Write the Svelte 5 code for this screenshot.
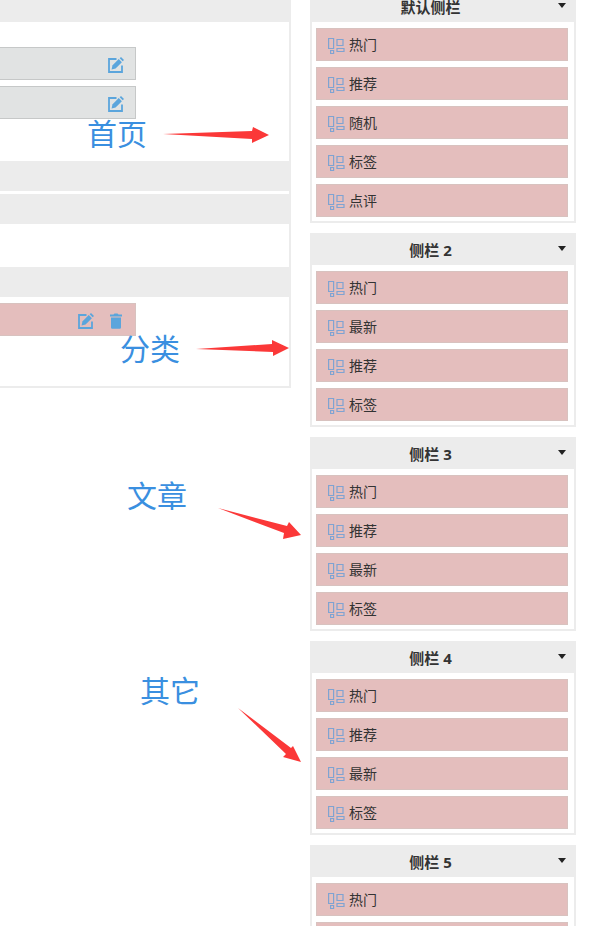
<script lang="ts">
  const sidebars = [
    { name: "默认侧栏", modules: ["热门", "推荐", "随机", "标签", "点评"] },
    { name: "侧栏 2", modules: ["热门", "最新", "推荐", "标签"] },
    { name: "侧栏 3", modules: ["热门", "推荐", "最新", "标签"] },
    { name: "侧栏 4", modules: ["热门", "推荐", "最新", "标签"] },
    { name: "侧栏 5", modules: ["热门", "推荐"] },
  ];

  const notes = [
    { text: "首页", x: 87, y: 145, arrow: "163,134 252,131 253,127 269,135 252,143 252,139" },
    { text: "分类", x: 120, y: 360, arrow: "196,349 272,344 272,340 289,348 273,356 273,352" },
    { text: "文章", x: 127, y: 507, arrow: "218,508 287,526 289,522 301,535 283,539 284,533" },
    { text: "其它", x: 140, y: 702, arrow: "238,708 291,748 293,746 301,762 283,757 286,754" },
  ];
</script>

{#snippet editButton()}
  <button class="tool" aria-label="编辑">
    <svg viewBox="0 0 16 16" width="16" height="16">
      <path d="M8.5 2H1v13h13V8.5" fill="none" stroke="currentColor" stroke-width="1.8" />
      <path d="M3.6 12.4l.8-4 6.3-6.3 3.2 3.2-6.3 6.3z" fill="currentColor" />
      <path d="M11.7 1.3L13 0l3 3-1.3 1.3z" fill="currentColor" />
    </svg>
  </button>
{/snippet}

<main class="page">
  <section class="layout">
    <div class="bar"></div>
    <div class="slots home">
      <div class="slot">{@render editButton()}</div>
      <div class="slot">{@render editButton()}</div>
    </div>
    <div class="bar"></div>
    <div class="bar spaced"></div>
    <div class="empty"></div>
    <div class="bar"></div>
    <div class="slots category">
      <div class="slot active">
        {@render editButton()}
        <button class="tool" aria-label="删除">
          <svg viewBox="0 0 16 16" width="16" height="16">
            <path
              d="M2 1.5h3.5L6.5.4h3l1 1.1H14v2H2zM3 4.5h10v9.7c0 .9-.7 1.6-1.6 1.6H4.6c-.9 0-1.6-.7-1.6-1.6z"
              fill="currentColor"
            />
          </svg>
        </button>
      </div>
    </div>
  </section>

  <aside class="sidebars">
    {#each sidebars as sidebar}
      <section class="sidebar">
        <header>
          <h3>{sidebar.name}</h3>
          <button class="toggle" aria-label="展开"></button>
        </header>
        <ul>
          {#each sidebar.modules as name}
            <li>
              <svg class="icon" viewBox="0 0 18 18" width="18" height="18">
                <path d="M.6 1.5h5v10h-5zM9 2.5h6v6H9zM9 11.5h7v3H9zM2.6 13.5h3v3h-3z" />
              </svg>
              <span>{name}</span>
            </li>
          {/each}
        </ul>
      </section>
    {/each}
  </aside>

  <svg class="notes" width="310" height="780">
    {#each notes as note}
      <text x={note.x} y={note.y}>{note.text}</text>
      <polygon points={note.arrow} />
    {/each}
  </svg>
</main>

<style>
  :global(body) {
    margin: 0;
    background: #fff;
    font-family: "Open Sans", "Noto Sans CJK SC", sans-serif;
    color: #333;
  }

  .page {
    position: relative;
    display: grid;
    grid-template-columns: 1fr 266px;
    column-gap: 19px;
    align-items: start;
    height: 100vh;
    padding-right: 15px;
    box-sizing: border-box;
    overflow: hidden;
  }

  .layout {
    border: 2px solid #ececec;
    border-width: 0 2px 2px 0;
    margin-top: -8px;
  }

  .bar {
    height: 30px;
    background: #ececec;
  }

  .bar.spaced {
    margin-top: 3px;
  }

  .empty {
    height: 43px;
  }

  .slots {
    display: grid;
    grid-template-columns: 8fr 9fr;
    row-gap: 6px;
  }

  .slots.home {
    padding: 25px 0 42px;
  }

  .slots.category {
    padding: 6px 0 50px;
  }

  .slot {
    grid-column: 1;
    display: flex;
    justify-content: flex-end;
    align-items: center;
    gap: 14px;
    height: 33px;
    padding: 2px 11px 0 0;
    box-sizing: border-box;
    border: 1px solid #c6c8c8;
    border-left: none;
    background: #e1e3e3;
  }

  .slot.active {
    border-color: #d8c2bf;
    background: #e4bebd;
  }

  .tool {
    display: block;
    padding: 0;
    border: none;
    background: none;
    color: #5ba5dc;
    cursor: pointer;
  }

  .tool svg {
    display: block;
  }

  .sidebars {
    display: grid;
    gap: 10px;
    margin-top: -10px;
  }

  .sidebar {
    border: 2px solid #ececec;
  }

  header {
    display: flex;
    height: 30px;
    background: #ececec;
  }

  h3 {
    flex: 1;
    margin: 0;
    font-size: 15px;
    line-height: 30px;
    font-weight: 700;
    text-align: center;
  }

  .toggle {
    display: flex;
    justify-content: center;
    width: 25px;
    padding: 11px 0 0;
    border: none;
    background: none;
    cursor: pointer;
  }

  .toggle::before {
    content: "";
    border: 4px solid transparent;
    border-top: 5px solid #222;
    border-bottom: none;
  }

  ul {
    display: grid;
    gap: 6px;
    margin: 0;
    padding: 6px 6px 4px 4px;
    list-style: none;
  }

  li {
    display: flex;
    align-items: center;
    gap: 3px;
    height: 33px;
    padding-left: 11px;
    box-sizing: border-box;
    border: 1px solid #d8c2bf;
    background: #e4bebd;
    font-size: 14px;
    line-height: 20px;
  }

  .icon {
    margin-top: 3px;
    fill: none;
    stroke: #7fa3d2;
    stroke-width: 1.2;
  }

  .notes {
    position: absolute;
    top: 0;
    left: 0;
    pointer-events: none;
  }

  .notes text {
    font-size: 30px;
    fill: #3a8fe0;
  }

  .notes polygon {
    fill: #fb3838;
  }
</style>
